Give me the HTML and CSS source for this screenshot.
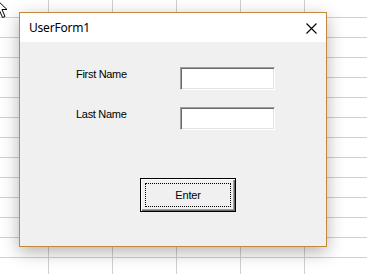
FILE: index.html
```html
<!DOCTYPE html>
<html lang="en">
<head>
    <meta charset="UTF-8">
    <title>UserForm1</title>
    <link rel="stylesheet" href="styles.css">
</head>
<body>
    <div class="sheet">
        <svg class="cursor" width="14" height="22" viewBox="0 0 14 22">
            <path d="M0.5 0.5 L0.5 16.5 L4.5 12.5 L7.5 19.5 L10 18.5 L7 11.5 L12 11.5 Z" fill="#fff" stroke="#000" stroke-width="1"/>
        </svg>

        <div class="window">
            <div class="titlebar">
                <span class="title">UserForm1</span>
                <svg class="close" width="11" height="11" viewBox="0 0 11 11">
                    <path d="M0.5 0.5 L10.5 10.5 M10.5 0.5 L0.5 10.5" stroke="#000" stroke-width="1.1"/>
                </svg>
            </div>
            <div class="form-body">
                <div class="field">
                    <label for="firstName">First Name</label>
                    <input type="text" id="firstName">
                </div>
                <div class="field">
                    <label for="lastName">Last Name</label>
                    <input type="text" id="lastName">
                </div>
                <div class="button-row">
                    <button><span class="focus">Enter</span></button>
                </div>
            </div>
        </div>
    </div>
</body>
</html>
```

FILE: styles.css
```css
body {
    margin: 0;
    font-family: "Liberation Sans", Arial, sans-serif;
}

.sheet {
    position: relative;
    width: 367px;
    height: 274px;
    overflow: hidden;
    background-color: #fff;
    background-image:
        linear-gradient(to right, #d0d0d0 1px, transparent 1px),
        linear-gradient(to bottom, #d0d0d0 1px, transparent 1px);
    background-size: 64px 20px;
    background-position: 48px 17px;
}

.cursor {
    position: absolute;
    left: -5px;
    top: -2px;
}

.window {
    position: absolute;
    left: 19px;
    top: 12px;
    width: 306px;
    height: 233px;
    border: 1px solid #c4883c;
    background: #f0f0f0;
    box-shadow: 0 5px 16px rgba(0, 0, 0, 0.3);
    display: flex;
    flex-direction: column;
}

.titlebar {
    height: 29px;
    background: #fff;
    display: flex;
    align-items: center;
    justify-content: space-between;
    padding: 0 9px 0 9px;
}

.title {
    font-family: "Noto Sans", sans-serif;
    font-size: 12px;
    color: #000;
    letter-spacing: -0.2px;
    margin-top: -1px;
}

.close {
    margin-top: 1px;
}

.form-body {
    padding: 25px 0 0 56px;
}

.field {
    display: flex;
    align-items: flex-start;
    height: 23px;
    margin-bottom: 17px;
}

label {
    width: 104px;
    font-size: 11px;
    color: #000;
    letter-spacing: -0.3px;
    padding-top: 1px;
}

input {
    box-sizing: border-box;
    width: 95px;
    height: 23px;
    margin: 0;
    padding: 0;
    background: #fff;
    border-style: solid;
    border-width: 1px;
    border-color: #a0a0a0 #fff #fff #a0a0a0;
    box-shadow: inset 1px 1px 0 #696969, inset -1px -1px 0 #e3e3e3;
    outline: none;
}

.button-row {
    padding: 31px 0 0 64px;
}

button {
    box-sizing: border-box;
    width: 96px;
    height: 34px;
    padding: 0;
    background: #f0f0f0;
    border: 1px solid #000;
    box-shadow: inset 1px 1px 0 #fff, inset -1px -1px 0 #696969, inset -2px -2px 0 #a0a0a0;
    display: flex;
}

.focus {
    flex: 1;
    margin: 4px;
    border: 1px dotted #000;
    display: flex;
    align-items: center;
    justify-content: center;
    font-family: "Liberation Sans", Arial, sans-serif;
    font-size: 11px;
    color: #000;
    letter-spacing: -0.2px;
}
```
